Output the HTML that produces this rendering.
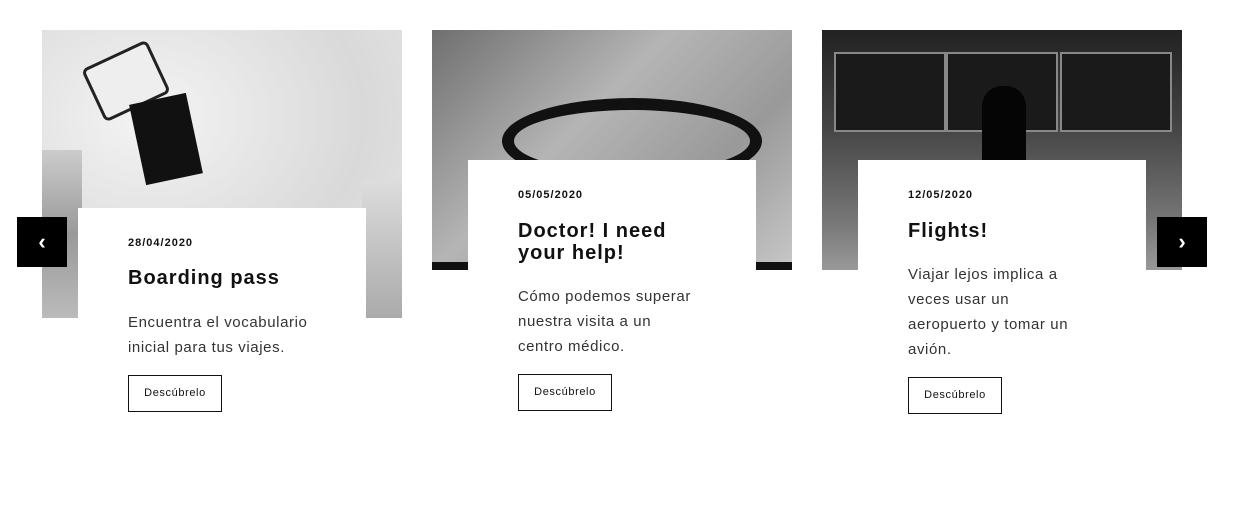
<!DOCTYPE html>
<html><head><meta charset="utf-8"><style>
body{margin:0;width:1238px;height:435px;background:#fff;position:relative;overflow:hidden;font-family:"Liberation Sans",Arial,sans-serif;color:#111}
.img{position:absolute;top:30px;width:360px}
.box{position:absolute;background:#fff;width:288px;height:300px}
.t{position:absolute;left:50px;width:220px}
.date{font-size:11px;font-weight:bold;letter-spacing:1px;color:#111}
.title{font-size:20px;font-weight:bold;letter-spacing:1px;line-height:22px;color:#111}
.body{font-size:15px;line-height:25px;letter-spacing:.6px;color:#333;white-space:nowrap}
.btn{position:absolute;left:50px;width:92px;height:35px;border:1px solid #111;font-size:11px;letter-spacing:.6px;text-align:center;line-height:35px;color:#111}
.arr{position:absolute;top:217px;width:50px;height:50px;background:#000;color:#fff;font-size:22px;font-weight:bold;text-align:center;line-height:50px}
</style></head><body>
<div class="img" style="left:42px;height:288px;background:radial-gradient(ellipse at 30% 30%,#f4f4f4,#d9d9d9 60%,#e8e8e8);">
 <div style="position:absolute;left:48px;top:22px;width:66px;height:52px;background:#eee;border:3px solid #222;border-radius:6px;transform:rotate(-25deg)"></div>
 <div style="position:absolute;left:95px;top:68px;width:58px;height:82px;background:#111;transform:rotate(-12deg)"></div>
 <div style="position:absolute;left:0;top:120px;width:40px;height:168px;background:linear-gradient(#ccc,#999,#bbb)"></div>
 <div style="position:absolute;right:0;top:150px;width:40px;height:138px;background:linear-gradient(#ddd,#aaa)"></div>
</div>
<div class="img" style="left:432px;height:240px;background:linear-gradient(135deg,#6f6f6f,#b5b5b5 40%,#999 70%,#c8c8c8);">
 <div style="position:absolute;left:70px;top:68px;width:236px;height:62px;border:12px solid #111;border-radius:50%"></div>
 <div style="position:absolute;left:0;bottom:0;width:360px;height:8px;background:#111"></div>
</div>
<div class="img" style="left:822px;height:240px;background:linear-gradient(#222,#444 40%,#777 80%,#999);">
 <div style="position:absolute;left:12px;top:22px;width:108px;height:76px;background:#1a1a1a;border:2px solid #888"></div>
 <div style="position:absolute;left:124px;top:22px;width:108px;height:76px;background:#1a1a1a;border:2px solid #888"></div>
 <div style="position:absolute;left:238px;top:22px;width:108px;height:76px;background:#1a1a1a;border:2px solid #888"></div>
 <div style="position:absolute;left:160px;top:56px;width:44px;height:110px;background:#050505;border-radius:20px 20px 4px 4px"></div>
</div>

<div class="box" style="left:78px;top:208px">
 <div class="t date" style="top:29px">28/04/2020</div>
 <div class="t title" style="top:59px">Boarding pass</div>
 <div class="t body" style="top:102px">Encuentra el vocabulario<br>inicial para tus viajes.</div>
 <div class="btn" style="top:167px">Descúbrelo</div>
</div>
<div class="box" style="left:468px;top:160px">
 <div class="t date" style="top:29px">05/05/2020</div>
 <div class="t title" style="top:60px">Doctor! I need<br>your help!</div>
 <div class="t body" style="top:124px">Cómo podemos superar<br>nuestra visita a un<br>centro médico.</div>
 <div class="btn" style="top:214px">Descúbrelo</div>
</div>
<div class="box" style="left:858px;top:160px">
 <div class="t date" style="top:29px">12/05/2020</div>
 <div class="t title" style="top:60px">Flights!</div>
 <div class="t body" style="top:102px">Viajar lejos implica a<br>veces usar un<br>aeropuerto y tomar un<br>avión.</div>
 <div class="btn" style="top:217px">Descúbrelo</div>
</div>

<div class="arr" style="left:17px">‹</div>
<div class="arr" style="left:1157px">›</div>
</body></html>
